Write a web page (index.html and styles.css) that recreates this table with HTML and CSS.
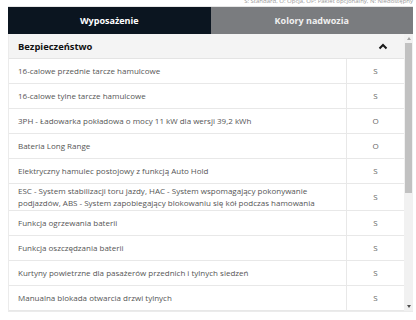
FILE: index.html
```html
<!DOCTYPE html>
<html lang="pl">
<head>
<meta charset="utf-8">
<title>Wyposażenie</title>
<link rel="stylesheet" href="styles.css">
</head>
<body>
<div class="page">
  <p class="legend">S: Standard, O: Opcja, OP: Pakiet opcjonalny, N: Niedostępny</p>
  <div class="tabs">
    <div class="tab active">Wyposażenie</div>
    <div class="tab">Kolory nadwozia</div>
  </div>
  <div class="panel">
    <div class="table">
      <div class="section">
        <span>Bezpieczeństwo</span>
        <svg class="chev" width="10" height="7" viewBox="0 0 10 7"><polyline points="1.5,5.5 5,2 8.5,5.5" fill="none" stroke="#1a1a1a" stroke-width="2"/></svg>
      </div>
      <div class="row"><div class="name">16-calowe przednie tarcze hamulcowe</div><div class="val">S</div></div>
      <div class="row"><div class="name">16-calowe tylne tarcze hamulcowe</div><div class="val">S</div></div>
      <div class="row"><div class="name">3PH - Ładowarka pokładowa o mocy 11 kW dla wersji 39,2 kWh</div><div class="val">O</div></div>
      <div class="row"><div class="name">Bateria Long Range</div><div class="val">O</div></div>
      <div class="row"><div class="name">Elektryczny hamulec postojowy z funkcją Auto Hold</div><div class="val">S</div></div>
      <div class="row"><div class="name">ESC - System stabilizacji toru jazdy, HAC - System wspomagający pokonywanie podjazdów, ABS - System zapobiegający blokowaniu się kół podczas hamowania</div><div class="val">S</div></div>
      <div class="row"><div class="name">Funkcja ogrzewania baterii</div><div class="val">S</div></div>
      <div class="row"><div class="name">Funkcja oszczędzania baterii</div><div class="val">S</div></div>
      <div class="row"><div class="name">Kurtyny powietrzne dla pasażerów przednich i tylnych siedzeń</div><div class="val">S</div></div>
      <div class="row"><div class="name">Manualna blokada otwarcia drzwi tylnych</div><div class="val">S</div></div>
      <div class="row"><div class="name">Poduszka powietrzna kierowcy i pasażera</div><div class="val">S</div></div>
    </div>
    <div class="scrollbar">
      <div class="arrow up"></div>
      <div class="track"><div class="thumb"></div></div>
      <div class="arrow down"></div>
    </div>
  </div>
</div>
</body>
</html>
```
FILE: styles.css
```css
html, body {
  margin: 0;
  padding: 0;
  background: #ffffff;
}
body {
  font-family: "Open Sans", "Liberation Sans", sans-serif;
  color: #555;
}
.page {
  padding: 0 3px 0 8px;
  width: 405px;
  overflow: hidden;
  height: 320px;
}
.legend {
  margin: -3px 0 0 0;
  height: 9px;
  font-size: 6px;
  line-height: 8px;
  text-align: right;
  color: #9a9a9a;
  white-space: nowrap;
}
.tabs {
  display: flex;
  height: 27px;
  border-top: 1px solid #e6e6e6;
}
.tab {
  flex: 1;
  display: flex;
  align-items: center;
  justify-content: center;
  font-weight: 700;
  font-size: 9px;
  background: #7a7c7f;
  color: #f0f0f0;
}
.tab.active {
  background: #0b1520;
  color: #ffffff;
}
.panel {
  display: flex;
  height: 278px;
  border-left: 1px solid #ebebeb;
  border-bottom: 1px solid #ebebeb;
  overflow: hidden;
  box-sizing: border-box;
}
.table {
  flex: 1;
  min-width: 0;
}
.section {
  display: flex;
  align-items: center;
  justify-content: space-between;
  height: 24px;
  padding: 0 16px 0 9px;
  background: #f4f4f4;
  border-bottom: 1px solid #e4e4e4;
  font-weight: 700;
  font-size: 9.4px;
  color: #111;
}
.chev {
  display: block;
}
.row {
  display: flex;
  border-bottom: 1px solid #e8e8e8;
  font-size: 8px;
  line-height: 12px;
}
.name {
  flex: 1;
  display: flex;
  align-items: center;
  min-height: 24px;
  padding: 1px 24px 1px 9px;
  box-sizing: border-box;
}
.val {
  width: 57px;
  flex: none;
  display: flex;
  align-items: center;
  justify-content: center;
  border-left: 1px solid #e8e8e8;
  color: #666;
}
.scrollbar {
  width: 9px;
  flex: none;
  background: #f1f1f1;
  display: flex;
  flex-direction: column;
}
.arrow {
  height: 9px;
  display: flex;
  align-items: center;
  justify-content: center;
}
.arrow::before {
  content: "";
  width: 0;
  height: 0;
  border-left: 2.5px solid transparent;
  border-right: 2.5px solid transparent;
}
.arrow.up::before {
  border-bottom: 3px solid #a3a3a3;
}
.arrow.down::before {
  border-top: 3px solid #505050;
}
.track {
  flex: 1;
  padding: 0 1px;
}
.thumb {
  height: 150px;
  background: #c1c1c1;
}
```
